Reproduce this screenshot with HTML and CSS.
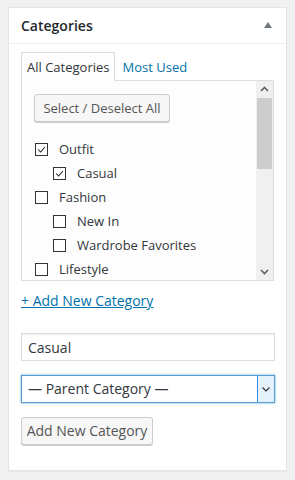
FILE: index.html
```html
<!doctype html>
<html>
<head>
    <meta charset="UTF-8">
    <title>Categories</title>
    <link rel="stylesheet" href="styles.css">
</head>
<body>
<div class="postbox">
    <div class="hd">
        <h2>Categories</h2>
        <span class="toggle"></span>
    </div>
    <div class="inside">
        <ul class="cat-tabs">
            <li class="active">All Categories</li>
            <li><a href="javascript:void(0);">Most Used</a></li>
        </ul>
        <div class="tabs-panel">
            <div class="cat-list">
                <button class="button btn-all">Select / Deselect All</button>
                <ul class="checklist">
                    <li><label><span class="cb on"><svg viewBox="0 0 13 13"><path d="M2.5 6.5l3 3 5-6"/></svg></span>Outfit</label>
                        <ul class="children">
                            <li><label><span class="cb on"><svg viewBox="0 0 13 13"><path d="M2.5 6.5l3 3 5-6"/></svg></span>Casual</label></li>
                        </ul>
                    </li>
                    <li><label><span class="cb"></span>Fashion</label>
                        <ul class="children">
                            <li><label><span class="cb"></span>New In</label></li>
                            <li><label><span class="cb"></span>Wardrobe Favorites</label></li>
                        </ul>
                    </li>
                    <li><label><span class="cb"></span>Lifestyle</label></li>
                </ul>
            </div>
            <div class="scrollbar">
                <span class="sb-btn"><svg viewBox="0 0 17 17"><path d="M5 10l3.5-3.5 3.5 3.5"/></svg></span>
                <span class="sb-track"><span class="sb-thumb"></span></span>
                <span class="sb-btn"><svg viewBox="0 0 17 17"><path d="M5 7l3.5 3.5 3.5-3.5"/></svg></span>
            </div>
        </div>
        <p class="add-toggle"><a href="javascript:void(0);">+ Add New Category</a></p>
        <input class="new-cat" type="text" value="Casual">
        <div class="select">
            <span class="select-txt">— Parent Category —</span>
            <span class="select-arrow"><svg viewBox="0 0 16 26"><path d="M4.5 11.5l3.5 3.5 3.5-3.5"/></svg></span>
        </div>
        <button class="button btn-add">Add New Category</button>
    </div>
</div>
</body>
</html>
```

FILE: styles.css
```css
html, body, h2, ul, p { margin: 0; padding: 0; }
ul { list-style: none; }
body { background: #f1f1f1; padding: 7px 8px; font: 13px/1.4 "Open Sans", "Noto Sans", sans-serif; color: #444; }

.postbox { width: 277px; border: 1px solid #e5e5e5; background: #fff; box-shadow: 0 1px 1px rgba(0,0,0,.04); height: 462px; }
.postbox .hd { display: flex; align-items: center; justify-content: space-between; height: 35px; border-bottom: 1px solid #eee; padding: 0 14px 0 12px; }
.postbox .hd h2 { font-size: 14px; font-weight: 600; color: #23282d; }
.toggle { width: 0; height: 0; border-left: 4px solid transparent; border-right: 4px solid transparent; border-bottom: 6px solid #72777c; margin-top: -2px; }

.inside { padding: 8px 12px 0; }

.cat-tabs { display: flex; align-items: flex-end; margin-bottom: -1px; position: relative; }
.cat-tabs li { height: 28px; line-height: 28px; padding: 0 5px; white-space: nowrap; }
.cat-tabs li.active { border: 1px solid #ddd; border-bottom: 0; background: #fdfdfd; color: #32373c; }
.cat-tabs a { color: #0073aa; text-decoration: none; margin-left: 2px; }

.tabs-panel { display: flex; height: 199px; border: 1px solid #ddd; background: #fdfdfd; }
.cat-list { flex: 1; overflow: hidden; padding: 13px 0 0 12px; }
.button { display: block; height: 28px; padding: 0 0 1px; border: 1px solid #ccc; border-radius: 3px; background: #f7f7f7; box-shadow: 0 1px 0 #ccc; color: #555; font: 13px "Open Sans", "Noto Sans", sans-serif; white-space: nowrap; }
.btn-all { width: 136px; }

.checklist { margin-top: 15px; }
.checklist label { display: flex; align-items: center; height: 24px; color: #32373c; white-space: nowrap; }
.checklist .children { padding-left: 18px; }
.cb { width: 11px; height: 11px; border: 1px solid #333; background: #fff; margin: 0 11px 0 1px; display: flex; }
.cb svg { width: 11px; height: 11px; }
.cb path { fill: none; stroke: #222; stroke-width: 1.2; }

.scrollbar { width: 17px; display: flex; flex-direction: column; background: #f0f0f0; }
.sb-btn { height: 17px; display: block; }
.sb-btn svg { width: 17px; height: 17px; display: block; }
.sb-btn path { fill: none; stroke: #606060; stroke-width: 1.6; }
.sb-track { flex: 1; display: block; }
.sb-thumb { display: block; height: 71px; margin: 0 1px; background: #cdcdcd; }

.add-toggle { margin: 10px 0 0; line-height: 20px; font-size: 14px; }
.add-toggle a { color: #0073aa; text-decoration: underline; }

.new-cat { display: block; box-sizing: border-box; width: 254px; height: 28px; margin-top: 22px; padding: 0 6px; border: 1px solid #ddd; box-shadow: inset 0 1px 2px rgba(0,0,0,.07); font: 14px "Open Sans", "Noto Sans", sans-serif; color: #32373c; outline: 0; }

.select { display: flex; box-sizing: border-box; width: 254px; height: 28px; margin-top: 14px; border: 1px solid #5b9dd9; box-shadow: 0 0 2px rgba(30,140,190,.8); color: #32373c; font-size: 14px; }
.select-txt { flex: 1; line-height: 26px; padding-left: 6px; }
.select-arrow { width: 16px; border-left: 1px solid #3c8dd9; background: #e5f1fb; }
.select-arrow svg { width: 16px; height: 26px; display: block; }
.select-arrow path { fill: none; stroke: #333; stroke-width: 1.2; }

.btn-add { margin-top: 14px; width: 132px; font-size: 14px; }
```
